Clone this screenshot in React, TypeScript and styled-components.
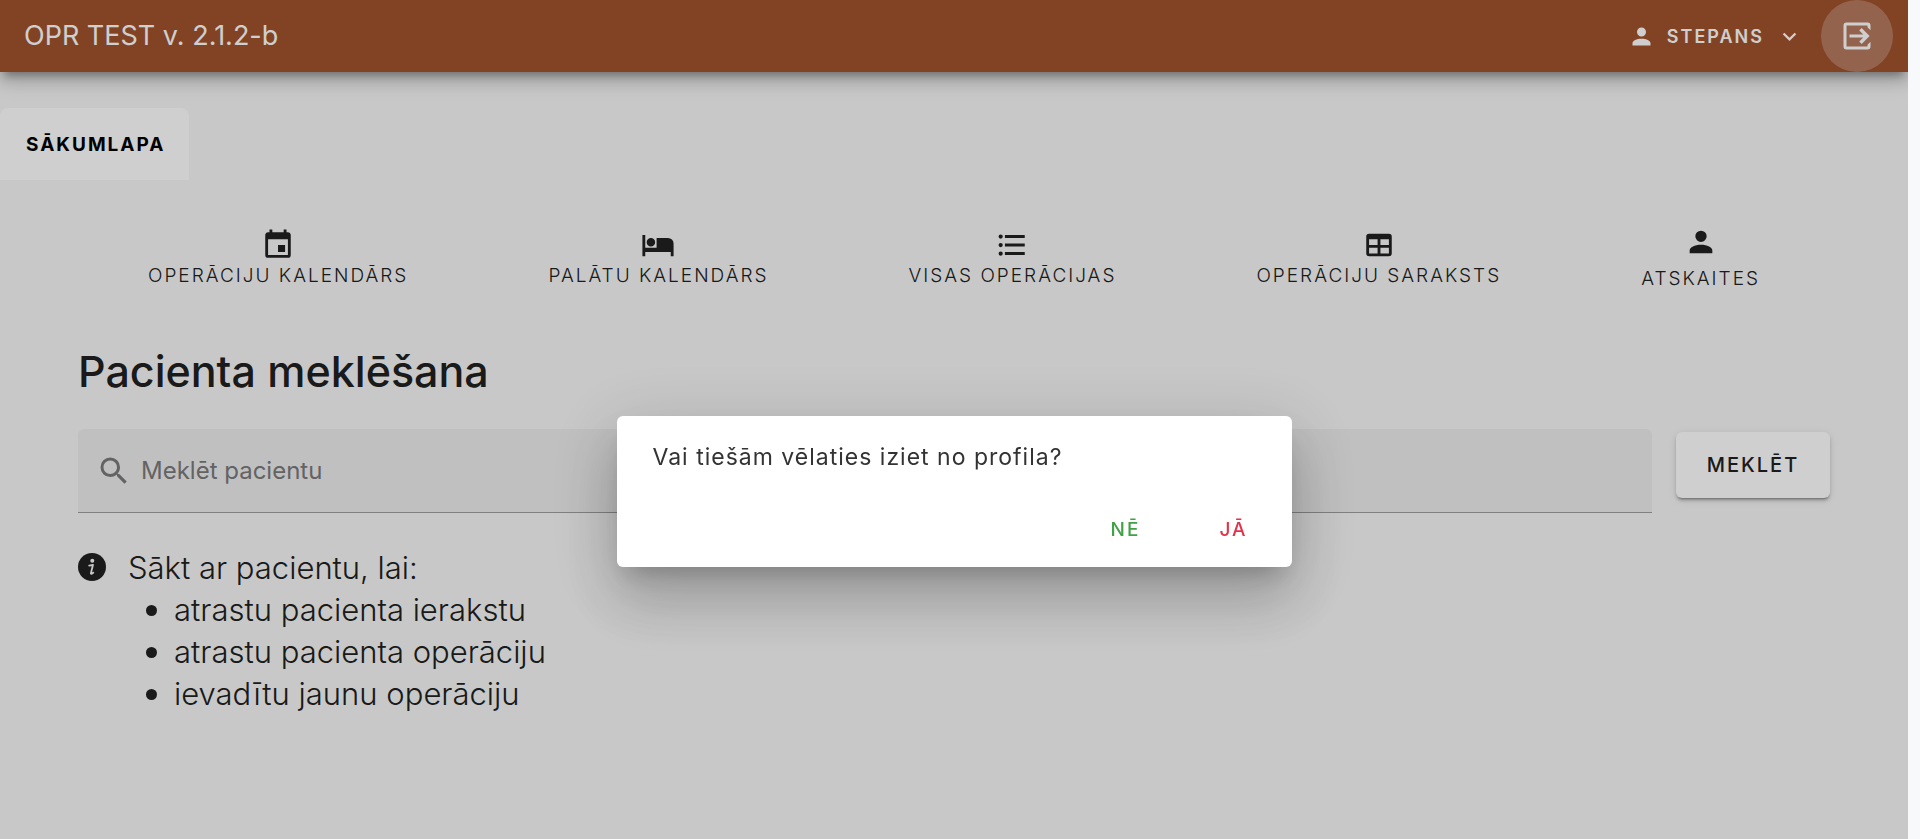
import React from "react";
import styled, { createGlobalStyle } from "styled-components";

const GlobalStyle = createGlobalStyle`
  * { box-sizing: border-box; }
  body {
    margin: 0;
    background: #f8f9fb;
    color: #212121;
    font-family: Inter, "Open Sans", sans-serif;
  }
  button, input { font: inherit; color: inherit; }
  button { padding: 0; border: 0; background: none; cursor: pointer; }
`;

const GUTTER = 12;

const Page = styled.div`
  min-height: 100vh;
  margin-right: ${GUTTER}px;
  background: #f7f7f7;
`;

const TopBar = styled.header`
  display: flex;
  align-items: center;
  justify-content: space-between;
  height: 72px;
  padding: 0 15px 0 24px;
  background: sienna;
  color: #fff;
  box-shadow: 0 8px 8px -5px rgba(0, 0, 0, 0.3), 0 9px 15px 1px rgba(0, 0, 0, 0.14),
    0 4px 24px 3px rgba(0, 0, 0, 0.1);
  clip-path: inset(0 0 -60px 0);
`;

const AppTitle = styled.div`
  font-size: 27px;
  line-height: 36px;
`;

const TopActions = styled.div`
  display: flex;
  align-items: center;
  gap: 18px;
`;

const UserButton = styled.button`
  display: flex;
  align-items: center;
  gap: 12px;
  font-size: 18px;
  font-weight: 600;
  letter-spacing: 2px;
`;

const ExitButton = styled.button`
  display: grid;
  place-items: center;
  width: 72px;
  height: 72px;
  border-radius: 50%;
  background: rgba(255, 255, 255, 0.24);
`;

const Tabs = styled.nav`
  display: flex;
  padding-top: 36px;
`;

const Tab = styled.a`
  padding: 2px 24px 0 26px;
  border-radius: 8px 8px 0 0;
  background: #fff;
  color: #000;
  font-size: 19px;
  font-weight: 700;
  line-height: 70px;
  letter-spacing: 2px;
  text-decoration: none;
`;

const Content = styled.main`
  padding: 46px 78px 0;
`;

const Menu = styled.nav`
  display: flex;
  align-items: center;
  justify-content: space-around;
  height: 66px;
`;

const MenuLink = styled.a<{ $gap?: number }>`
  display: flex;
  flex-direction: column;
  align-items: center;
  gap: ${(p) => p.$gap ?? 0}px;
  color: inherit;
  font-size: 19px;
  font-weight: 300;
  line-height: 28px;
  letter-spacing: 2px;
  text-decoration: none;
`;

const Heading = styled.h1`
  margin: 49px 0 28px;
  font-size: 43px;
  font-weight: 500;
  line-height: 60px;
`;

const SearchForm = styled.form`
  display: flex;
  align-items: flex-start;
  gap: 24px;
`;

const Field = styled.label`
  flex: 1;
  display: flex;
  align-items: center;
  gap: 9px;
  height: 84px;
  padding: 0 18px;
  border-bottom: 1px solid #9e9e9e;
  border-radius: 6px 6px 0 0;
  background: #ededed;
  color: #7a7a7a;
`;

const FieldInput = styled.input`
  flex: 1;
  min-width: 0;
  padding: 0;
  border: 0;
  outline: 0;
  background: none;
  font-size: 24px;
  line-height: 36px;
  &::placeholder { color: #7a7a7a; opacity: 1; }
`;

const SearchButton = styled.button`
  width: 154px;
  height: 66px;
  margin-top: 3px;
  border-radius: 6px;
  background: #fff;
  font-size: 20px;
  font-weight: 500;
  letter-spacing: 2px;
  box-shadow: 0 3px 2px -2px rgba(0, 0, 0, 0.3), 0 3px 3px rgba(0, 0, 0, 0.14),
    0 2px 8px rgba(0, 0, 0, 0.12);
`;

const Hint = styled.section`
  display: flex;
  gap: 22px;
  margin-top: 34px;
  font-size: 31px;
  font-weight: 300;
  line-height: 42px;
`;

const HintIcon = styled.div`
  padding-top: 6px;
  line-height: 0;
`;

const HintList = styled.ul`
  margin: 0;
  padding: 0 0 0 18px;
  list-style: none;
`;

const HintItem = styled.li`
  display: flex;
  align-items: center;
  gap: 17px;
  &::before {
    content: "";
    width: 11px;
    height: 11px;
    border-radius: 50%;
    background: #212121;
  }
`;

const Overlay = styled.div`
  position: fixed;
  inset: 0 ${GUTTER}px 0 0;
  display: flex;
  justify-content: center;
  align-items: flex-start;
  padding-top: 416px;
  background: rgba(0, 0, 0, 0.19);
`;

const Dialog = styled.div`
  width: 675px;
  max-width: 90%;
  padding: 23px 36px 11px;
  border-radius: 6px;
  background: #fff;
  box-shadow: 0 16px 22px -10px rgba(0, 0, 0, 0.2), 0 36px 57px 4px rgba(0, 0, 0, 0.14),
    0 14px 69px 12px rgba(0, 0, 0, 0.12);
`;

const Question = styled.p`
  margin: 0 0 27px;
  color: #333;
  font-size: 23px;
  line-height: 36px;
  letter-spacing: 1px;
`;

const DialogActions = styled.div`
  display: flex;
  justify-content: flex-end;
  gap: 12px;
  margin-right: -26px;
`;

const DialogButton = styled.button<{ $color: string }>`
  width: 96px;
  height: 54px;
  color: ${(p) => p.$color};
  font-size: 19px;
  font-weight: 500;
  letter-spacing: 2px;
`;

const icons = {
  account:
    "M12 4a4 4 0 0 1 4 4 4 4 0 0 1-4 4 4 4 0 0 1-4-4 4 4 0 0 1 4-4m0 10c4.42 0 8 1.79 8 4v2H4v-2c0-2.21 3.58-4 8-4z",
  chevron: "M7.41 8.58 12 13.17l4.59-4.59L18 10l-6 6-6-6z",
  calendar:
    "M19 19H5V8h14m-3-7v2H8V1H6v2H5c-1.11 0-2 .89-2 2v14a2 2 0 0 0 2 2h14a2 2 0 0 0 2-2V5c0-1.11-.9-2-2-2h-1V1m-1 11h-5v5h5z",
  bed: "M19 7h-8v7H3V5H1v15h2v-3h18v3h2v-9a4 4 0 0 0-4-4M7 13a3 3 0 0 0 3-3 3 3 0 0 0-3-3 3 3 0 0 0-3 3 3 3 0 0 0 3 3z",
  list: "M7 5h14v2H7zM7 11h14v2H7zM7 17h14v2H7zM4 4.5a1.5 1.5 0 1 1 0 3 1.5 1.5 0 0 1 0-3zM4 10.5a1.5 1.5 0 1 1 0 3 1.5 1.5 0 0 1 0-3zM4 16.5a1.5 1.5 0 1 1 0 3 1.5 1.5 0 0 1 0-3z",
  table:
    "M5 4h14a2 2 0 0 1 2 2v12a2 2 0 0 1-2 2H5a2 2 0 0 1-2-2V6a2 2 0 0 1 2-2m0 4v4h6V8zm8 0v4h6V8zm-8 6v4h6v-4zm8 0v4h6v-4z",
  magnify:
    "M9.5 3A6.5 6.5 0 0 1 16 9.5c0 1.61-.59 3.09-1.56 4.23l.27.27h.79l5 5-1.5 1.5-5-5v-.79l-.27-.27A6.52 6.52 0 0 1 9.5 16 6.5 6.5 0 0 1 3 9.5 6.5 6.5 0 0 1 9.5 3m0 2C7 5 5 7 5 9.5S7 14 9.5 14 14 12 14 9.5 12 5 9.5 5z",
};

const Icon = ({ name, size }: { name: keyof typeof icons; size: number }) => (
  <svg width={size} height={size} viewBox="0 0 24 24" fill="currentColor" fillRule="evenodd" aria-hidden="true">
    <path d={icons[name]} />
  </svg>
);

const ExitIcon = () => (
  <svg width="36" height="36" viewBox="0 0 24 24" fill="currentColor" aria-hidden="true">
    <path d="M5 3h14a2 2 0 0 1 2 2v3.2l-2-2V5H5v14h14v-1.2l2-2V19a2 2 0 0 1-2 2H5a2 2 0 0 1-2-2V5a2 2 0 0 1 2-2z" />
    <path d="M7 11h9.200l-2.700-2.700L15.100 6.700l5.300 5.300-5.300 5.300-1.600-1.600 2.700-2.700H7z" />
  </svg>
);

const InfoIcon = () => (
  <svg width="28" height="28" viewBox="0 0 28 28" aria-hidden="true">
    <circle cx="14" cy="14" r="14" fill="#212121" />
    <circle cx="14.3" cy="7.8" r="2" fill="#f7f7f7" />
    <path
      d="M11.2 12.6 15 11.8 12.9 20.2c-.2 1 .9.9 2.400-.6"
      fill="none"
      stroke="#f7f7f7"
      strokeWidth="1.8"
      strokeLinejoin="round"
      strokeLinecap="round"
    />
  </svg>
);

const menu: { icon: keyof typeof icons; label: string; gap?: number }[] = [
  { icon: "calendar", label: "OPERĀCIJU KALENDĀRS" },
  { icon: "bed", label: "PALĀTU KALENDĀRS" },
  { icon: "list", label: "VISAS OPERĀCIJAS" },
  { icon: "table", label: "OPERĀCIJU SARAKSTS" },
  { icon: "account", label: "ATSKAITES", gap: 6 },
];

const hints = ["atrastu pacienta ierakstu", "atrastu pacienta operāciju", "ievadītu jaunu operāciju"];

export default function App() {
  return (
    <>
      <GlobalStyle />
      <Page>
        <TopBar>
          <AppTitle>OPR TEST v. 2.1.2-b</AppTitle>
          <TopActions>
            <UserButton type="button">
              <Icon name="account" size={27} />
              STEPANS
              <Icon name="chevron" size={27} />
            </UserButton>
            <ExitButton type="button" aria-label="Iziet">
              <ExitIcon />
            </ExitButton>
          </TopActions>
        </TopBar>
        <Tabs>
          <Tab href="#">SĀKUMLAPA</Tab>
        </Tabs>
        <Content>
          <Menu>
            {menu.map((m) => (
              <MenuLink key={m.label} href="#" $gap={m.gap}>
                <Icon name={m.icon} size={34} />
                {m.label}
              </MenuLink>
            ))}
          </Menu>
          <Heading>Pacienta meklēšana</Heading>
          <SearchForm onSubmit={(e) => e.preventDefault()}>
            <Field>
              <Icon name="magnify" size={36} />
              <FieldInput type="text" placeholder="Meklēt pacientu" aria-label="Meklēt pacientu" />
            </Field>
            <SearchButton type="submit">MEKLĒT</SearchButton>
          </SearchForm>
          <Hint>
            <HintIcon>
              <InfoIcon />
            </HintIcon>
            <div>
              Sākt ar pacientu, lai:
              <HintList>
                {hints.map((h) => (
                  <HintItem key={h}>{h}</HintItem>
                ))}
              </HintList>
            </div>
          </Hint>
        </Content>
      </Page>
      <Overlay>
        <Dialog role="dialog" aria-modal="true" aria-labelledby="question">
          <Question id="question">Vai tiešām vēlaties iziet no profila?</Question>
          <DialogActions>
            <DialogButton type="button" $color="#43a047">NĒ</DialogButton>
            <DialogButton type="button" $color="#e5304a">JĀ</DialogButton>
          </DialogActions>
        </Dialog>
      </Overlay>
    </>
  );
}
